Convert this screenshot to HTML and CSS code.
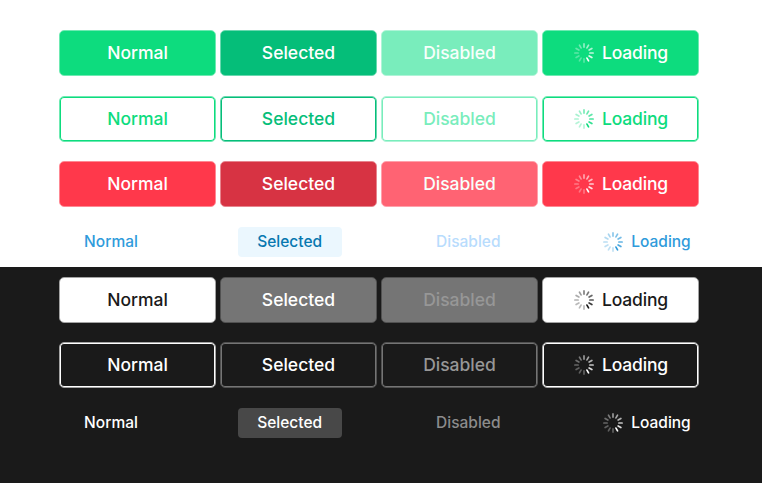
FILE: index.html
```
<!DOCTYPE html>
<html lang="en">
<head>
<meta charset="utf-8">
<title>Button states</title>
<link rel="stylesheet" href="styles.css">
</head>
<body>
<svg class="defs" aria-hidden="true">
  <symbol id="spinner" viewBox="-10 -10 20 20">
    <g stroke="currentColor" stroke-width="1.7" stroke-linecap="round">
      <path d="M0-9.1V-5.9" opacity=".55"/>
      <path d="M0-9.1V-5.9" opacity=".6" transform="rotate(30)"/>
      <path d="M0-9.1V-5.9" opacity=".66" transform="rotate(60)"/>
      <path d="M0-9.1V-5.9" opacity=".75" transform="rotate(90)"/>
      <path d="M0-9.1V-5.9" opacity=".85" transform="rotate(120)"/>
      <path d="M0-9.1V-5.9" opacity="1" transform="rotate(150)"/>
      <path d="M0-9.1V-5.9" opacity=".3" transform="rotate(180)"/>
      <path d="M0-9.1V-5.9" opacity=".3" transform="rotate(210)"/>
      <path d="M0-9.1V-5.9" opacity=".3" transform="rotate(240)"/>
      <path d="M0-9.1V-5.9" opacity=".33" transform="rotate(270)"/>
      <path d="M0-9.1V-5.9" opacity=".36" transform="rotate(300)"/>
      <path d="M0-9.1V-5.9" opacity=".42" transform="rotate(330)"/>
    </g>
  </symbol>
</svg>
<section class="panel light">
  <div class="row primary">
    <button class="btn">Normal</button>
    <button class="btn selected">Selected</button>
    <button class="btn disabled">Disabled</button>
    <button class="btn loading"><svg class="spinner"><use href="#spinner"/></svg>Loading</button>
  </div>
  <div class="row outline">
    <button class="btn">Normal</button>
    <button class="btn selected">Selected</button>
    <button class="btn disabled">Disabled</button>
    <button class="btn loading"><svg class="spinner"><use href="#spinner"/></svg>Loading</button>
  </div>
  <div class="row danger">
    <button class="btn">Normal</button>
    <button class="btn selected">Selected</button>
    <button class="btn disabled">Disabled</button>
    <button class="btn loading"><svg class="spinner"><use href="#spinner"/></svg>Loading</button>
  </div>
  <div class="row link">
    <button class="btn">Normal</button>
    <button class="btn selected">Selected</button>
    <button class="btn disabled">Disabled</button>
    <button class="btn loading"><svg class="spinner"><use href="#spinner"/></svg>Loading</button>
  </div>
</section>
<section class="panel dark">
  <div class="row primary">
    <button class="btn">Normal</button>
    <button class="btn selected">Selected</button>
    <button class="btn disabled">Disabled</button>
    <button class="btn loading"><svg class="spinner"><use href="#spinner"/></svg>Loading</button>
  </div>
  <div class="row outline">
    <button class="btn">Normal</button>
    <button class="btn selected">Selected</button>
    <button class="btn disabled">Disabled</button>
    <button class="btn loading"><svg class="spinner"><use href="#spinner"/></svg>Loading</button>
  </div>
  <div class="row link">
    <button class="btn">Normal</button>
    <button class="btn selected">Selected</button>
    <button class="btn disabled">Disabled</button>
    <button class="btn loading"><svg class="spinner"><use href="#spinner"/></svg>Loading</button>
  </div>
</section>
</body>
</html>
```
FILE: styles.css
```
* { box-sizing: border-box; }
body { margin: 0; background: #1a1a1a; font-family: Inter, "Liberation Sans", sans-serif; }
.defs { display: none; }

.panel { padding-left: 59px; display: flex; flex-direction: column; gap: 19.5px; }
.light { --page: #fff; height: 267px; padding-top: 30px; background: #fff; }
.dark { --page: #1a1a1a; height: 216px; padding-top: 9.9px; background: #1a1a1a; }

.row { display: flex; justify-content: space-between; width: 640px; }

/* The half-strength outer ring plus a solid inner ring gives a soft 1.5px edge. */
.btn {
  --edge: transparent;
  display: flex; align-items: center; justify-content: center; gap: 8px;
  width: 157px; height: 46px; margin: 0; padding: 0;
  border: 1px solid color-mix(in srgb, var(--edge) 60%, var(--page)); border-radius: 5px;
  box-shadow: inset 0 0 0 1px var(--edge);
  background: none; color: #fff;
  font: 500 17.5px/22px Inter, "Liberation Sans", sans-serif;
}
.spinner { width: 20px; height: 20px; flex: none; }
.loading { letter-spacing: -0.2px; padding-left: 1px; }

.primary .btn, .danger .btn { background: var(--edge); background-clip: padding-box; }

.link .btn {
  width: 104px; height: 30px; border: 0; border-radius: 4px; box-shadow: none;
  font-size: 15.5px; letter-spacing: 0; padding-top: 1px;
}
.link .loading { padding-left: 0; }

.light .primary .btn, .light .outline .btn { --edge: #0ddc7e; }
.light .primary .selected, .light .outline .selected { --edge: #05be79; }
.light .primary .disabled, .light .outline .disabled { --edge: #79edbc; }
.light .outline .btn { color: var(--edge); }
.light .primary .disabled, .danger .disabled { color: #f7fffb; }

.danger .btn { --edge: #ff384b; }
.danger .selected { --edge: #d73343; }
.danger .disabled { --edge: #ff6373; }

.light .link .btn { color: #2f9bdb; }
.light .link .selected { background: #ebf7fe; color: #0878b0; }
.light .link .disabled { color: #b8dcfd; }

.dark .btn { --edge: #fff; }
.dark .selected, .dark .disabled { --edge: #757575; }
.dark .primary .btn { color: #1a1a1a; }
.dark .primary .selected { color: #fff; }
.dark .primary .disabled { color: #979797; }
.dark .outline .disabled { color: #979797; }

.dark .link .selected { background: #484848; }
.dark .link .disabled { color: #8c8c8c; }
```
